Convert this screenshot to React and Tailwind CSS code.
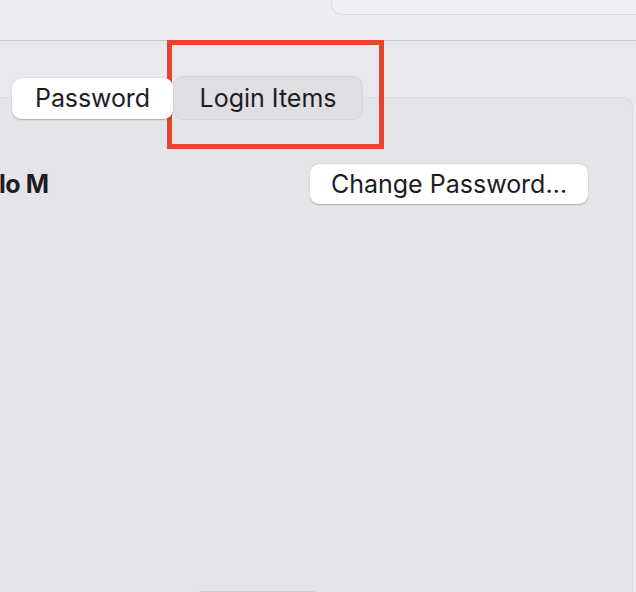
export default function App() {
  return (
    <div className="relative w-[636px] h-[592px] overflow-hidden bg-[#eae8ed] font-['Inter','Noto_Sans',sans-serif] text-[#1d1d1f]">
      <div className="h-[41px] bg-[#efedf2] border-b border-[#c6c4ca] flex justify-end items-start">
        <div className="w-[305px] h-[15px] rounded-bl-[11px] border-l border-b border-[#dcdae0] bg-[#f1eff4]"></div>
      </div>

      <div className="relative z-10 flex items-center ml-[12px] mt-[35px] h-[44px]">
        <div className="w-[161px] h-[41px] bg-white rounded-[9px] shadow-[0_0.5px_1.5px_rgba(0,0,0,0.25)] flex items-center justify-center text-[25px] leading-none tracking-[-0.1px]">
          Password
        </div>
        <div className="w-[190px] h-[44px] bg-[#dfdee3] rounded-[10px] border border-[#d6d5da] flex items-center justify-center text-[25px] leading-none tracking-[0px]">
          Login Items
        </div>
      </div>

      <div className="-mt-[23px] w-[633px] h-[520px] bg-[#e5e4e9] border-t border-r border-[#dcdbe0] rounded-tr-[10px] flex flex-col">
        <div className="flex items-center justify-between pt-[66px] pr-[44px]">
          <div className="-ml-[1px] text-[25px] font-bold leading-none tracking-[-0.4px]">lo M</div>
          <div className="w-[278px] h-[40px] bg-white rounded-[9px] shadow-[0_0.5px_1.5px_rgba(0,0,0,0.25)] flex items-center justify-center text-[25px] leading-none tracking-[0px]">
            Change Password…
          </div>
        </div>
        <div className="ml-[199px] mt-[387px] w-[117px] h-[6px] bg-[#d2d1d6] rounded-t-[2px]"></div>
      </div>

      <div className="absolute left-[167px] top-[40px] w-[217px] h-[109px] border-[5px] border-[#e6442b]"></div>
    </div>
  );
}
